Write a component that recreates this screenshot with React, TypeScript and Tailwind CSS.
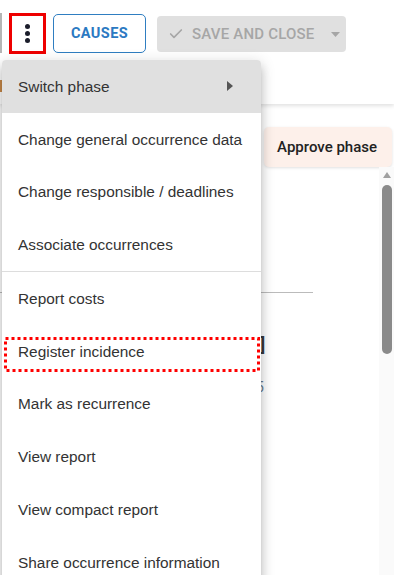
import { Check } from 'lucide-react';

const menuItems = [
    'Switch phase',
    'Change general occurrence data',
    'Change responsible / deadlines',
    'Associate occurrences',
    'Report costs',
    'Register incidence',
    'Mark as recurrence',
    'View report',
    'View compact report',
    'Share occurrence information',
];

const ActionsMenu = () => (
    <div className="absolute left-[2px] top-[60px] w-[259px] h-[560px] bg-white rounded-[4px] shadow-[0_5px_5px_-3px_rgba(0,0,0,0.2),0_8px_10px_1px_rgba(0,0,0,0.14),0_3px_14px_2px_rgba(0,0,0,0.12)] font-['Liberation_Sans',Arial,sans-serif] text-[15.4px] text-[#333]">
        {menuItems.map((label, i) => (
            <div key={label}>
                {i === 4 && <div className="h-px bg-[#ddd]" />}
                <div
                    className={`h-[52.75px] flex items-center justify-between pl-[16px] whitespace-nowrap ${
                        i === 0 ? 'bg-[#e0e0e0] rounded-t-[4px] pr-[28px]' : ''
                    }`}
                >
                    <span>{label}</span>
                    {i === 0 && (
                        <svg width="6" height="10" viewBox="0 0 6 10">
                            <path d="M0 0 L6 5 L0 10 Z" fill="#555" />
                        </svg>
                    )}
                </div>
            </div>
        ))}
    </div>
);

export default function App() {
    return (
        <div className="relative w-[394px] h-[575px] overflow-hidden bg-white font-['Roboto',sans-serif]">
            {/* Toolbar */}
            <div className="h-[104px] flex items-start pt-[13px] shadow-[0_2px_4px_rgba(0,0,0,0.12)] relative">
                <div className="w-[2px] h-[40px] bg-[#b5b5b5]" />
                <div className="ml-[7px] w-[37px] h-[41px] border-[3px] border-[#ee0000] flex flex-col items-center justify-center gap-[2.4px]">
                    <span className="w-[4.5px] h-[4.5px] rounded-full bg-[#1b1d2b]" />
                    <span className="w-[4.5px] h-[4.5px] rounded-full bg-[#1b1d2b]" />
                    <span className="w-[4.5px] h-[4.5px] rounded-full bg-[#1b1d2b]" />
                </div>
                <div className="ml-[7px] mt-px w-[93px] h-[39px] border border-[#2f7ec1] rounded-[5px] flex items-center justify-center text-[14.5px] font-bold tracking-[0.4px] text-[#2b79c2]">
                    CAUSES
                </div>
                <div className="ml-[11px] mt-[3px] w-[189px] h-[36px] bg-[#e0e0e0] rounded-[4px] flex items-center pl-[11px] text-[#a6a6a6]">
                    <Check size={16} strokeWidth={2.5} />
                    <span className="ml-[8px] text-[15px] font-medium tracking-[0.2px]">SAVE AND CLOSE</span>
                    <svg className="ml-[16px]" width="9" height="5" viewBox="0 0 9 5">
                        <path d="M0 0 L9 0 L4.5 5 Z" fill="#a6a6a6" />
                    </svg>
                </div>
            </div>
            <div className="absolute left-0 top-[80px] w-[2px] h-[12px] bg-[#c98a4a]" />

            {/* Page content behind the menu */}
            <div className="flex justify-end pr-[2px] mt-[23px]">
                <div className="h-[40px] pl-[13px] pr-[15px] flex items-center bg-[#fdf0ea] rounded-[5px] text-[15px] font-medium text-[#222] shadow-[0_1px_3px_rgba(0,0,0,0.12)]">
                    Approve phase
                </div>
            </div>
            <div className="flex h-[420px]">
                <div className="flex-1 flex flex-col">
                    <div className="h-[125px]" />
                    <div className="w-[313px] h-px bg-[#bbb]" />
                    <div className="h-[44px]" />
                    <div className="pl-[260px] text-[19px] leading-[16px] font-bold text-[#3a3a3a]">]</div>
                    <div className="h-[27px]" />
                    <div className="pl-[256px] text-[14px] leading-[14px] text-[#6a7d90]">5</div>
                    <div className="flex-1" />
                    <div className="w-[348px] h-px bg-[#ddd] mb-[3px]" />
                </div>
                <div className="w-[15px] bg-[#fafafa] flex flex-col items-center pt-[5px]">
                    <svg width="8" height="6" viewBox="0 0 8 6">
                        <path d="M0 6 L4 0 L8 6 Z" fill="#a0a0a0" />
                    </svg>
                    <div className="mt-[7px] w-[10px] h-[169px] rounded-full bg-[#8a8a8a]" />
                </div>
            </div>

            <ActionsMenu />

            {/* Highlight around Register incidence */}
            <svg className="absolute left-[4px] top-[337px]" width="256" height="35" viewBox="0 0 256 35">
                <rect x="1.5" y="1.5" width="253" height="32" fill="none" stroke="#ff0000" strokeWidth="3" strokeDasharray="3 3" />
            </svg>
        </div>
    );
}
